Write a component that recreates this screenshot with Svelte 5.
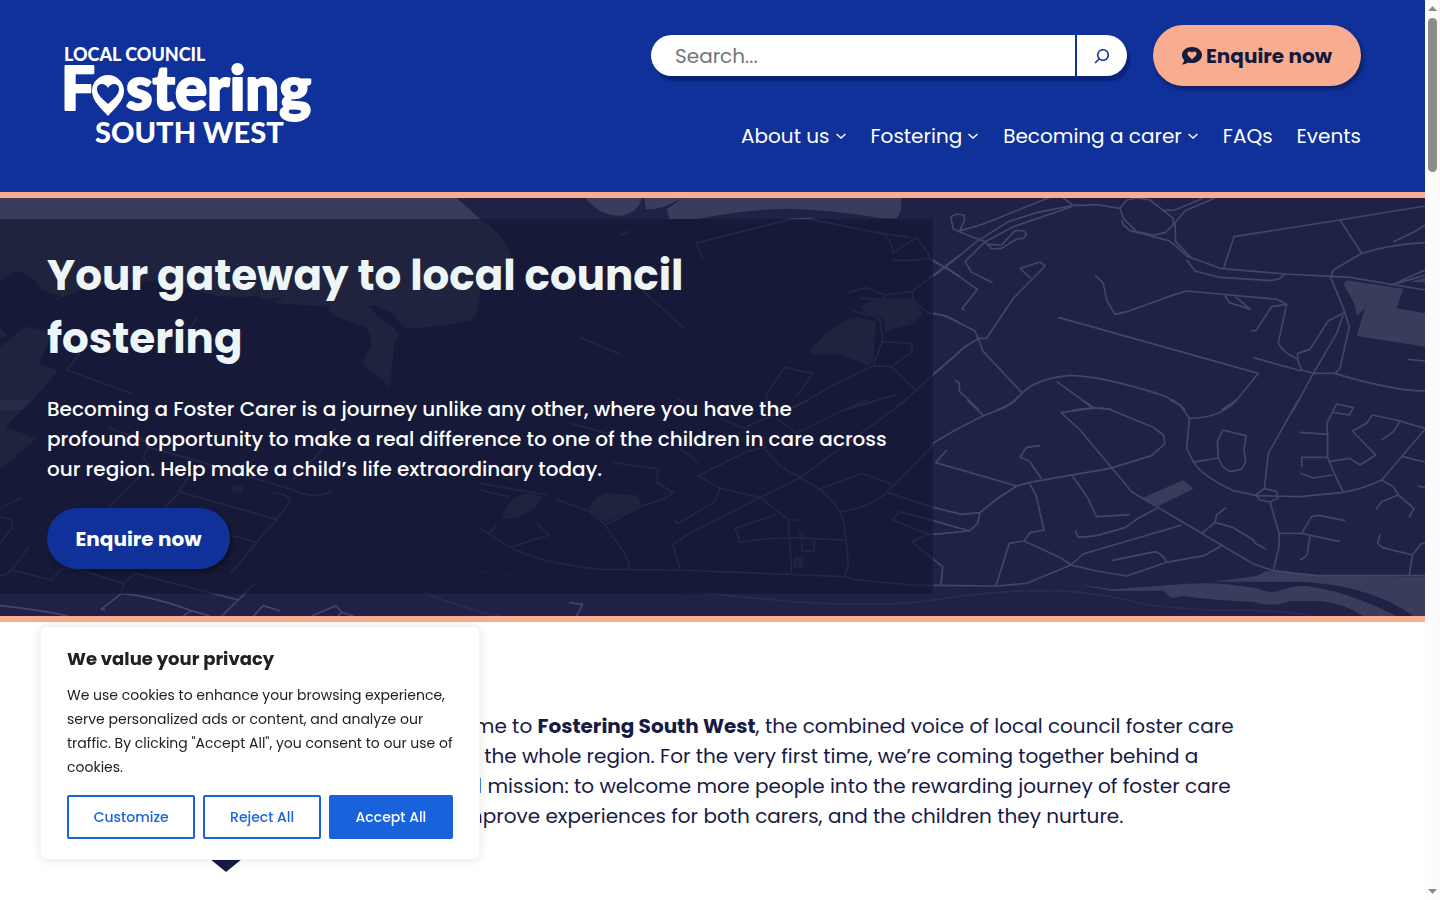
<script lang="ts">
  interface NavItem {
    label: string;
    href: string;
    submenu: boolean;
  }

  interface MapTile {
    x: number;
    y: number;
    roads: string[];
    areas: string[];
    faint?: string[];
  }

  const navItems: NavItem[] = [
    { label: "About us", href: "#about", submenu: true },
    { label: "Fostering", href: "#fostering", submenu: true },
    { label: "Becoming a carer", href: "#carer", submenu: true },
    { label: "FAQs", href: "#faqs", submenu: false },
    { label: "Events", href: "#events", submenu: false },
  ];

  // Each tile is drawn in its own coordinates and moved into place.
  const mapTiles: MapTile[] = [
    {
      x: 0,
      y: -24,
      areas: [
        "M0 0H1340L1370 24L1440 86Q1530 150 1535 210L1440 300Q1440 380 1410 392Q1320 410 1215 416L1180 375Q1140 345 1105 346Q1120 370 1145 385L1200 432L1182 465L1170 592L1092 525Q1085 500 1112 475Q1120 430 1095 410L1020 385Q985 375 985 350L825 340L850 320L790 330L770 318L720 322L650 318L480 270L260 290L150 340L180 318L118 298V285L75 250L45 242L0 275Z",
        "M0 470L75 410L160 425L115 520L175 543L70 660H0Z",
        "M0 415Q22 430 22 440L0 445Z",
      ],
      roads: ["M240 490L200 540L400 613", "M590 385L570 415"],
    },
    {
      x: 1440,
      y: -24,
      areas: [
        "M310 0L320 28Q360 78 420 77Q475 70 485 24V0Z",
        "M490 0L497 58Q550 60 605 24V0Z",
        "M640 0L560 58L570 90L660 86Q800 58 920 56Q1060 60 1200 84L1250 86L1264 60V0Z",
        "M985 482Q1080 385 1130 382L1188 395L1180 510L1165 528L1080 492L1005 494Z",
        "M1140 350L1190 328L1295 325L1330 372L1300 400L1215 425L1210 385L1150 365Z",
      ],
      roads: [
        "M670 205L648 160L930 88L985 86L1200 130L1290 142",
        "M1195 125Q1235 140 1240 188L1310 142L1345 190V205Q1300 215 1240 210",
        "M1345 205L1362 212L1440 260",
        "M1440 195L1295 305L1215 315L1160 293L1105 307",
        "M1140 325L1210 327L1220 312",
        "M1295 305L1300 330L1345 370H1362Q1410 378 1440 400",
        "M1110 357Q1150 375 1185 378L1200 392L1208 450L1180 525",
        "M1208 455L1290 460Q1305 475 1290 490L1235 530L1180 528L1060 585L940 655",
        "M1235 530L1310 603M1440 485L1362 552L1310 600L1245 655",
        "M850 660L865 605L915 532L998 550L950 620",
        "M490 305L615 417M300 442L425 495M420 137L450 123",
        "M1100 658L1250 613M590 625L640 650",
      ],
    },
    {
      x: 2790,
      y: -24,
      areas: [
        "M1240 282L1250 271L1420 296L1400 355L1485 370V470L1280 438L1305 355L1282 378L1272 340Z",
        "M1440 275L1485 262V278Z",
      ],
      roads: [
        "M360 22L160 102L85 124L70 118L62 80L80 72L102 75L104 90L88 125L165 155L185 177L215 175L260 147L280 145L290 132L280 122L255 122L215 165L175 163",
        "M10 258L45 232L140 155L235 95L320 68L425 47L500 44L570 55",
        "M400 24L430 47M425 50L250 110L165 155L105 215L125 247L188 278",
        "M10 214L60 240L142 298L97 355L103 362",
        "M12 372L45 377L135 423L160 485L275 607",
        "M270 235L330 216L345 228L250 325L170 445H147L105 470L10 553",
        "M270 235L302 265",
        "M570 55L590 30L620 24L660 30L730 85V105L705 128L670 135L620 125L580 85Z",
        "M575 90L580 105L600 122L640 132L715 152L740 170L770 198L870 235L1065 252L1260 262L1485 300",
        "M698 62L735 60L820 24M855 24L765 62L735 98L737 155L785 205",
        "M770 210L795 243L870 262L1025 272L1050 265L1065 252",
        "M880 237L912 140L1230 90L1485 48",
        "M1230 90L1295 190L1210 240L1202 262L1240 355L1258 410L1230 535L1215 550H1150L1115 540L1103 510V490L1140 478L1195 392L1243 368",
        "M1295 190Q1380 163 1485 158M1390 155Q1460 125 1485 105M1380 285Q1440 270 1485 255M1400 278L1485 240",
        "M495 255L520 280L530 330L555 373L590 365L715 320L770 303L1040 328L1070 343L1045 458Q1055 485 1103 508",
        "M885 317L898 338L962 358L915 320M1070 343L1025 350L978 422H963",
        "M385 382L985 550L920 630L875 660",
        "M970 503L1115 543M1240 375L1220 430L1150 550L1090 660",
        "M1215 550Q1310 580 1400 595Q1450 603 1485 603M1433 508L1485 513",
        "M75 570L88 580V603L147 660M200 660Q240 650 275 610Q320 565 420 556Q510 558 680 610Q740 630 765 660",
        "M380 575L490 653M430 660Q490 650 545 658",
      ],
    },
    {
      x: 2790,
      y: 606,
      areas: [
        "M635 295L760 240L790 267L685 318Z",
        "M850 545L980 528L1010 513L1150 525L1485 532V648H1450Q1330 560 1120 545Z",
        "M380 550Q470 555 545 568L720 555Q850 540 980 565Q1020 585 1060 568Q1120 552 1150 562Q1250 575 1400 648H1300Q1240 610 1170 603L1080 603Q1020 625 970 605Q850 602 760 588L725 595L700 572L545 573L450 555Z",
      ],
      roads: [
        "M258 0L225 22L160 47L80 88L0 135M112 0L160 47",
        "M50 150L17 188L260 258L300 247L540 205L665 167L705 130L700 105L670 82L535 27L490 24L393 38L450 90L605 275L815 400L970 492L1030 512L1160 527H1485",
        "M455 0L490 24M335 237L298 183L270 172L290 142L330 137",
        "M260 258L200 297L150 338L95 343L10 322M150 338L143 370L118 393L10 403M10 362L118 393",
        "M298 250L318 285L342 390L300 398L282 423L238 430L198 557",
        "M282 423L395 475L423 495L460 462L755 375",
        "M423 495L500 513L590 528L710 487L822 467L875 437M423 495L290 550L200 558L10 556",
        "M545 482L675 455Q700 463 710 487",
        "M423 222L470 288L500 350L600 344",
        "M435 392L445 412L500 407L585 383L620 358L680 325",
        "M720 0L750 15L778 55L770 145L790 185Q810 225 910 272L980 287L1110 290L1240 277Q1300 267 1355 240L1485 88",
        "M778 55Q870 55 920 0M787 187L865 174L878 200L900 215L935 208L947 185L942 150L948 107L878 90L862 125L865 174",
        "M1105 0L1015 160L1003 265L1040 275L1043 295L1020 306L990 300L978 285L1003 265",
        "M1020 306L1047 400V440L1030 512M1047 400H1115L1145 350L1165 346L1245 362",
        "M1115 400L1230 425M1140 407L1132 460L1125 472L1110 480",
        "M815 400L855 367L910 383L970 420L975 430L1007 447M855 367L860 345L888 323",
        "M1110 97L1193 103L1190 70L1220 12L1270 23L1258 45L1210 37M1193 103V172L1208 210L1240 277",
        "M1193 172H1115V202M1110 220L1150 234L1208 225M1195 185L1260 175L1290 195L1337 165L1267 93L1310 70L1327 45L1410 63L1485 85",
        "M1410 63L1390 95L1355 120M1418 170L1485 186M1355 240L1390 260L1405 285L1452 325L1437 352M1405 285L1355 305L1338 328",
        "M1350 403L1343 430L1358 443L1447 465L1475 430H1485M1447 465L1438 525M1463 258L1485 262",
        "M10 478L38 500L33 555",
      ],
      faint: ["M90 588Q220 572 340 572Q480 570 640 612Q780 632 920 630Q1060 632 1140 646"],
    },
    {
      x: 1440,
      y: 606,
      areas: [
        "M65 350Q85 290 140 280L185 290Q175 325 130 345Q90 365 65 350Z",
        "M325 330Q345 285 380 280L470 285L485 318L375 366Z",
        "M940 470H970V503H940Z",
        "M955 387L982 412L958 415Z",
      ],
      roads: [
        "M0 250L200 285M0 270L85 290M225 297L325 332L375 375L430 455Q445 475 450 508",
        "M400 188L535 207L528 247L580 278L550 298L485 318L375 375",
        "M0 385L90 442Q180 490 360 508L600 510L1095 530L1130 540L1300 555L1360 556",
        "M50 375L25 403M170 370L207 405L90 442",
        "M600 507L578 433L620 405L840 292L960 233L1280 0",
        "M655 228L700 205L800 155L860 140M655 228L720 265L840 292L925 360H970",
        "M720 265L705 305L595 370L582 360M925 360L935 520M890 343L765 385L780 427L850 417L935 413L1095 420",
        "M965 415V453H1003V420",
        "M850 140L895 195L1020 268L1060 305L1080 335Q1095 360 1105 490L1095 530",
        "M1020 268L1145 220L1235 252M1080 335Q1170 325 1220 277L1340 155L1360 135",
        "M1220 277L1360 322M1360 362L1258 335L1237 360L1345 403L1360 402M1345 403L1295 425L1360 478",
        "M890 55L950 100L1080 35L1160 0M800 80L985 0M720 55L800 88M275 70L380 100M600 145L655 188",
        "M268 608L308 613L290 648",
      ],
      faint: ["M0 515Q400 560 720 583Q1180 640 1440 588", "M0 638Q30 645 60 646"],
    },
    {
      x: 0,
      y: 606,
      areas: ["M0 0H95L15 82L110 115L0 210Z", "M700 252L733 262L722 278L690 270Z"],
      roads: [
        "M320 80L450 130L430 170L450 200L325 325M440 140L600 185L880 270Q940 300 1000 272",
        "M1005 85L960 155L920 200L880 240M575 220L535 275L830 358L870 305Q865 280 820 277M535 280L495 323",
        "M690 405L770 427L830 358M770 427L690 523M0 350L35 360L38 380L0 430M0 325L65 292",
        "M85 443L35 510L152 540L185 507L240 510L370 550L405 520L715 600L765 550",
        "M35 510L15 525H0M370 550L365 580L303 628H315M365 580Q460 590 575 632L630 648M575 632L550 648M715 600L665 648",
        "M0 617Q120 630 205 648M760 648L790 617L840 633M935 648L1008 617L1025 637L1060 648M1025 637L1015 648",
      ],
      faint: ["M1150 485L1440 490M1160 500Q1210 570 1440 635"],
    },
  ];

  let query = $state("");
  let showConsent = $state(true);

  function closeConsent(): void {
    showConsent = false;
  }
</script>

<div class="window">
  <div class="page">
    <header class="site-header">
      <a class="logo" href="#home" aria-label="Local Council Fostering South West">
        <svg width="252" height="100" viewBox="0 0 252 100" fill="#fff" stroke="#fff" stroke-linejoin="round">
          <text class="logo-small" x="-1" y="15">LOCAL COUNCIL</text>
          <text class="logo-big" x="-4" y="64">F</text>
          <path
            stroke="none"
            fill-rule="evenodd"
            d="M43 29C34 29 27 36 27 45C27 55 36 62 43 70C50 62 59 55 59 45C59 36 52 29 43 29ZM43 58C38 53 32 49 32 43C32 37 40 36 43 42C46 36 54 37 54 43C54 49 48 53 43 58Z"
          />
          <text class="logo-big" x="61" y="64">stering</text>
          <text class="logo-mid" x="30" y="97">SOUTH WEST</text>
        </svg>
      </a>

      <div class="header-side">
        <div class="header-tools">
          <form class="search" role="search" onsubmit={(event) => event.preventDefault()}>
            <input type="search" placeholder="Search..." aria-label="Search" bind:value={query} />
            <button type="submit" aria-label="Search">
              <svg width="24" height="24" viewBox="0 0 24 24" fill="#10309a">
                <path
                  d="M13 5c-3.300 0-6 2.700-6 6 0 1.400.500 2.700 1.300 3.700l-3.800 3.800 1.100 1.100 3.800-3.800c1 .800 2.300 1.300 3.700 1.300 3.300 0 6-2.700 6-6S16.300 5 13 5zm0 10.500c-2.500 0-4.500-2-4.500-4.500s2-4.500 4.500-4.500 4.500 2 4.500 4.500-2 4.500-4.500 4.500z"
                />
              </svg>
            </button>
          </form>
          <a class="pill peach" href="#enquire">
            <svg width="20" height="18" viewBox="0 0 20 18" fill="#161a3a">
              <path
                fill-rule="evenodd"
                d="M10 0C4.500 0 0 3.500 0 8C0 10 .8 11.700 2.200 13.100C2 15 .5 17 0 17.500C2.500 17.700 5 16.500 6 15.500C7.200 15.900 8.500 16.100 10 16.100C15.500 16.100 20 12.500 20 8C20 3.500 15.500 0 10 0ZM10 12.500L6.300 8.800C5 7.400 5.300 5.500 6.500 4.800C7.700 4 9 4.400 10 5.500C11 4.400 12.300 4 13.500 4.800C14.700 5.500 15 7.400 13.700 8.800Z"
              />
            </svg>
            Enquire now
          </a>
        </div>

        <nav aria-label="Main">
          <ul>
            {#each navItems as item}
              <li>
                <a href={item.href}>{item.label}</a>
                {#if item.submenu}
                  <button type="button" class="submenu" aria-label={`${item.label} submenu`}>
                    <svg width="12" height="12" viewBox="0 0 12 12" fill="none" stroke="#fff" stroke-width="1.500">
                      <path d="M1.500 4L6 8l4.500-4" />
                    </svg>
                  </button>
                {/if}
              </li>
            {/each}
          </ul>
        </nav>
      </div>
    </header>

    <main>
      <section class="hero">
        <svg class="map" viewBox="0 0 4275 1254" preserveAspectRatio="xMidYMid slice" aria-hidden="true">
          {#each mapTiles as tile}
            <g transform={`translate(${tile.x} ${tile.y})`}>
              {#each tile.areas as d}
                <path class="area" {d} />
              {/each}
              {#each tile.roads as d}
                <path class="road" {d} />
              {/each}
              {#each tile.faint ?? [] as d}
                <path class="road faint" {d} />
              {/each}
            </g>
          {/each}
        </svg>
        <div class="hero-box">
          <h1>Your gateway to local council fostering</h1>
          <p>
            Becoming a Foster Carer is a journey unlike any other, where you have the<br />
            profound opportunity to make a real difference to one of the children in care across<br />
            our region. Help make a child’s life extraordinary today.
          </p>
          <a class="pill blue" href="#enquire">Enquire now</a>
        </div>
      </section>

      <section class="intro">
        <svg class="pin" width="120" height="161" viewBox="0 0 120 161" aria-hidden="true">
          <path fill="#161a45" d="M60 161L22 130Q0 100 0 60A60 60 0 0 1 120 60Q120 100 98 130Z" />
          <path fill="#fff" d="M60 108L30 76C12 50 46 28 60 52C74 28 108 50 90 76Z" />
        </svg>
        <p>
          Welcome to <strong>Fostering South West</strong>, the combined voice of local council foster care<br />
          across the whole region. For the very first time, we’re coming together behind a<br />
          shared mission: to welcome more people into the rewarding journey of foster care<br />
          and improve experiences for both carers, and the children they nurture.
        </p>
      </section>
    </main>
  </div>

  <div class="scrollbar" aria-hidden="true">
    <svg width="9" height="5" viewBox="0 0 9 5"><path d="M0 5L4.500 0L9 5Z" /></svg>
    <div class="track"><div class="thumb"></div></div>
    <svg width="9" height="5" viewBox="0 0 9 5"><path d="M0 0L4.500 5L9 0Z" /></svg>
  </div>
</div>

{#if showConsent}
  <div class="consent" role="dialog" aria-labelledby="consent-title">
    <h2 id="consent-title">We value your privacy</h2>
    <p>
      We use cookies to enhance your browsing experience,<br />
      serve personalized ads or content, and analyze our<br />
      traffic. By clicking "Accept All", you consent to our use of<br />
      cookies.
    </p>
    <div class="consent-actions">
      <button type="button">Customize</button>
      <button type="button" onclick={closeConsent}>Reject All</button>
      <button type="button" class="primary" onclick={closeConsent}>Accept All</button>
    </div>
  </div>
{/if}

<style>
  :global(body) {
    margin: 0;
    background: #fff;
    color: #161a45;
    font-family: Poppins, Inter, "Open Sans", sans-serif;
    font-size: 20px;
    line-height: 30px;
  }

  .window {
    display: flex;
    height: 100vh;
    overflow: hidden;
  }

  .page {
    flex: 1;
    min-width: 0;
  }

  a {
    color: inherit;
    text-decoration: none;
  }

  h1,
  h2,
  p,
  ul {
    margin: 0;
    padding: 0;
  }

  button,
  input {
    font: inherit;
  }

  .site-header {
    display: flex;
    justify-content: space-between;
    align-items: flex-start;
    padding: 25px 64px 41px;
    border-bottom: 6px solid #f9ad90;
    background: #10309a;
    color: #fff;
  }

  .logo {
    margin-top: 21px;
    padding-left: 1px;
  }

  .logo svg {
    display: block;
    overflow: visible;
    font-family: Lato, sans-serif;
    font-weight: 900;
    line-height: 1;
  }

  .logo-small {
    font-size: 18px;
    stroke-width: 0;
  }

  .logo-big {
    font-size: 60px;
    stroke-width: 2px;
  }

  .logo-mid {
    font-size: 29px;
    stroke-width: 0;
  }

  .header-side {
    display: flex;
    flex-direction: column;
    align-items: flex-end;
    gap: 35px;
  }

  .header-tools {
    display: flex;
    align-items: center;
    gap: 26px;
  }

  .search {
    display: flex;
    width: 476px;
    height: 41px;
    border-radius: 21px;
    overflow: hidden;
    background: #fff;
    box-shadow: 3px 5px 2px #0a2378;
  }

  .search input {
    flex: 1;
    min-width: 0;
    border: 0;
    padding: 0 24px;
    background: none;
    outline: none;
  }

  .search input::placeholder {
    color: #757575;
  }

  .search button {
    display: grid;
    place-items: center;
    width: 52px;
    border: 0;
    border-left: 2px solid #10309a;
    padding: 0;
    background: none;
    cursor: pointer;
  }

  .pill {
    display: inline-flex;
    align-items: center;
    justify-content: center;
    gap: 4px;
    box-sizing: border-box;
    height: 61px;
    padding: 0 28px;
    border-radius: 31px;
    font-weight: 700;
    box-shadow: 2px 3px 4px rgba(0, 0, 0, 0.4);
  }

  .peach {
    min-width: 208px;
    background: #f9ad90;
    color: #161a3a;
  }

  .blue {
    min-width: 183px;
    background: #10309a;
    color: #fff;
  }

  nav ul {
    display: flex;
    gap: 24px;
    list-style: none;
  }

  nav li {
    display: flex;
    align-items: center;
    gap: 5px;
  }

  .submenu {
    display: flex;
    border: 0;
    padding: 0;
    background: none;
    cursor: pointer;
  }

  .hero {
    position: relative;
    padding: 21px 0 22px;
    border-bottom: 6px solid #f9ad90;
    background: #1f2145;
    overflow: hidden;
  }

  .map {
    position: absolute;
    inset: 0;
    width: 100%;
    height: 100%;
  }

  .area {
    fill: #fff;
    fill-opacity: 0.12;
  }

  .road {
    fill: none;
    stroke: #43456a;
    stroke-width: 5;
    stroke-linejoin: round;
  }

  .road.faint {
    opacity: 0.3;
  }

  .hero-box {
    position: relative;
    display: flex;
    flex-direction: column;
    align-items: flex-start;
    gap: 24px;
    box-sizing: border-box;
    width: 65.5%;
    padding: 25px 47px;
    background: rgba(19, 22, 47, 0.65);
    color: #fff;
  }

  h1 {
    max-width: 700px;
    color: #eef5f6;
    font-size: 42px;
    font-weight: 700;
    line-height: 63px;
  }

  .hero-box p {
    font-weight: 500;
    white-space: nowrap;
  }

  .intro {
    display: flex;
    gap: 126px;
    padding: 89px 166px;
  }

  .intro p {
    white-space: nowrap;
  }

  .pin {
    flex: none;
  }

  .scrollbar {
    display: flex;
    flex-direction: column;
    align-items: center;
    gap: 7px;
    box-sizing: border-box;
    width: 15px;
    padding: 6px 0;
    background: #fcfcfc;
    fill: #8b8b8b;
  }

  .track {
    flex: 1;
  }

  .thumb {
    width: 9px;
    height: 154px;
    border-radius: 5px;
    background: #8b8b8b;
  }

  .consent {
    position: fixed;
    bottom: 40px;
    left: 40px;
    box-sizing: border-box;
    width: 440px;
    padding: 18px 26px 20px;
    border: 1px solid #f4f4f4;
    border-radius: 6px;
    background: #fff;
    color: #212121;
    box-shadow: 0 0 10px rgba(0, 0, 0, 0.1);
    font-size: 14px;
    line-height: 24px;
  }

  .consent h2 {
    margin-bottom: 10px;
    font-size: 18px;
    font-weight: 700;
    line-height: 28px;
  }

  .consent p {
    white-space: nowrap;
  }

  .consent-actions {
    display: flex;
    gap: 8px;
    margin-top: 16px;
  }

  .consent-actions button {
    flex: 1 1 auto;
    height: 44px;
    border: 2px solid #1863dc;
    border-radius: 2px;
    padding: 0 24px;
    background: #fff;
    color: #1863dc;
    font-weight: 500;
    cursor: pointer;
  }

  .consent-actions .primary {
    background: #1863dc;
    color: #fff;
  }
</style>
